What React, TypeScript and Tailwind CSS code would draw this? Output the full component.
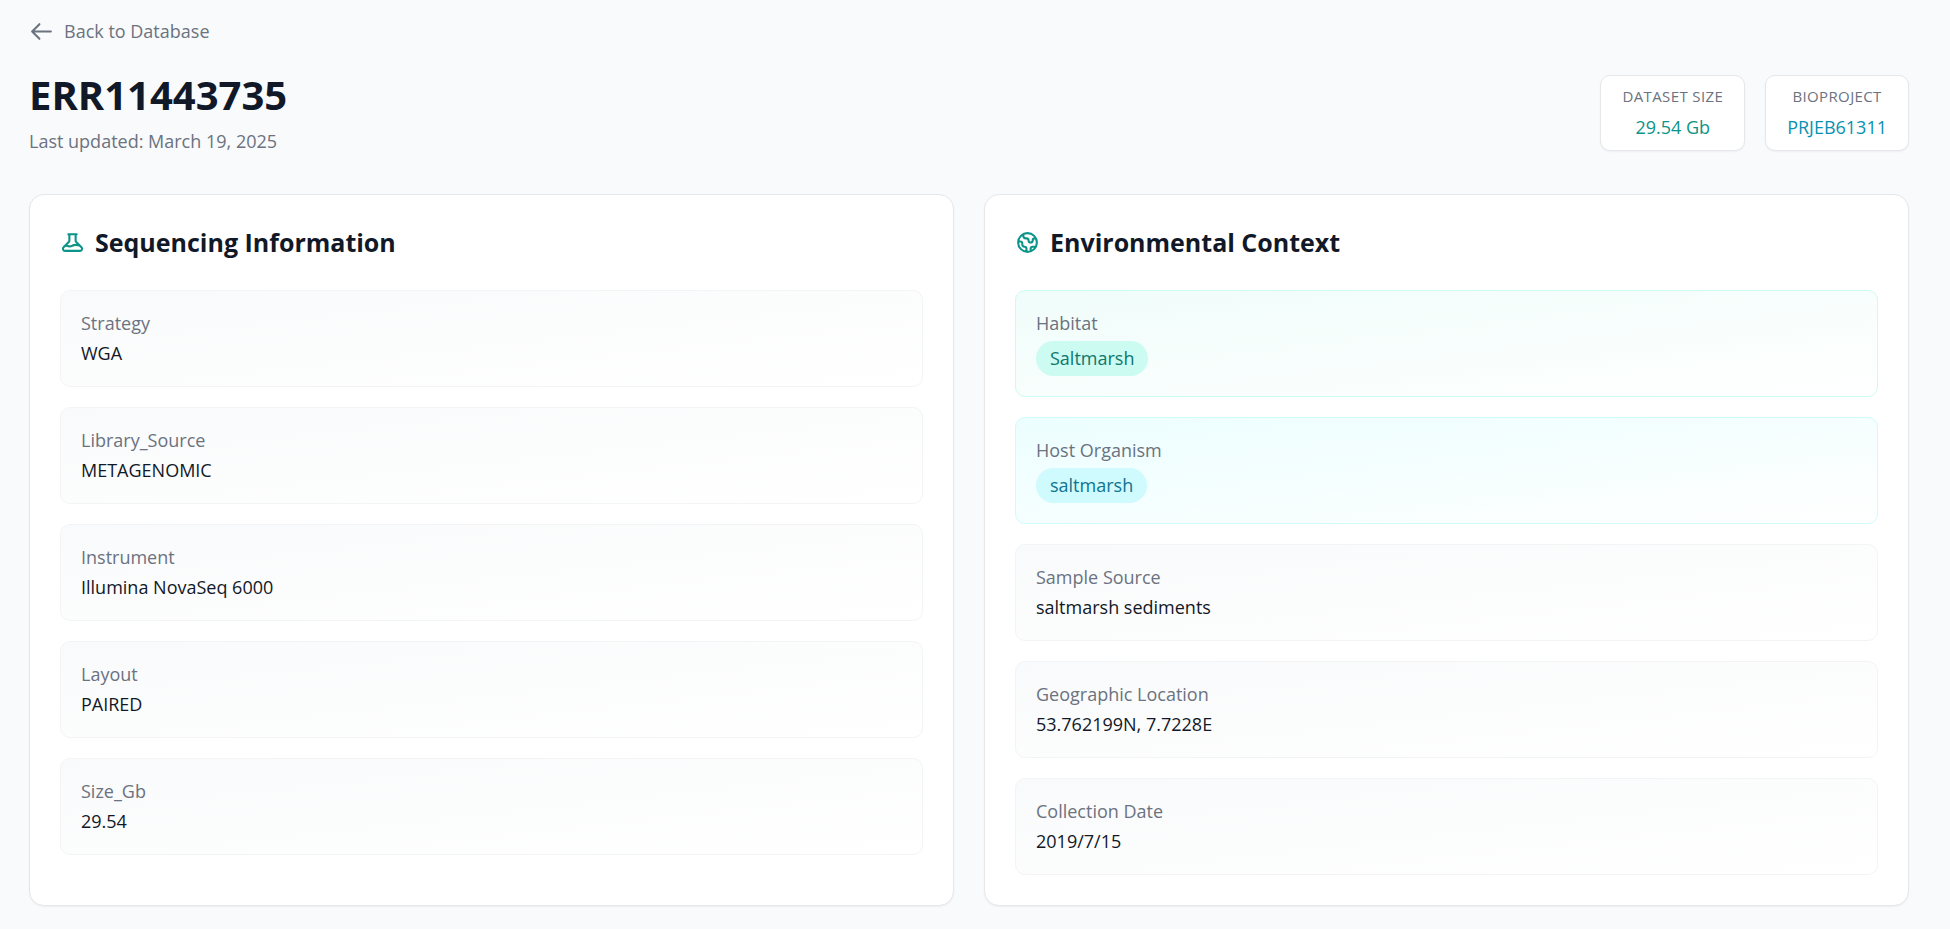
import React from 'react';
import { HiOutlineArrowLeft, HiOutlineBeaker, HiOutlineGlobe } from 'react-icons/hi';
import clsx from 'clsx';

type Tone = 'plain' | 'teal' | 'cyan';

interface Field {
  label: string;
  value: string;
  tone?: Tone;
}

const sequencing: Field[] = [
  { label: 'Strategy', value: 'WGA' },
  { label: 'Library_Source', value: 'METAGENOMIC' },
  { label: 'Instrument', value: 'Illumina NovaSeq 6000' },
  { label: 'Layout', value: 'PAIRED' },
  { label: 'Size_Gb', value: '29.54' },
];

const environment: Field[] = [
  { label: 'Habitat', value: 'Saltmarsh', tone: 'teal' },
  { label: 'Host Organism', value: 'saltmarsh', tone: 'cyan' },
  { label: 'Sample Source', value: 'saltmarsh sediments' },
  { label: 'Geographic Location', value: '53.762199N, 7.7228E' },
  { label: 'Collection Date', value: '2019/7/15' },
];

const boxStyles: Record<Tone, string> = {
  plain: 'border-[#f3f4f6] from-[#f9fafb]',
  teal: 'border-[#ccfbf1] from-[#f0fdfa]',
  cyan: 'border-[#cffafe] from-[#ecfeff]',
};

const badgeStyles: Record<Tone, string> = {
  plain: '',
  teal: 'bg-[#ccfbf1] text-[#0f766e]',
  cyan: 'bg-[#cffafe] text-[#0e7490]',
};

function FieldBox({ label, value, tone = 'plain' }: Field) {
  return (
    <div className={clsx('rounded-[10px] border bg-linear-to-br/srgb to-white p-5', boxStyles[tone])}>
      <dt className="mb-[5px] text-[#6b7280]">{label}</dt>
      <dd className="flex">
        {tone === 'plain' ? (
          <span className="text-[#111827]">{value}</span>
        ) : (
          <span className={clsx('rounded-full px-[14px] py-[5px]', badgeStyles[tone])}>{value}</span>
        )}
      </dd>
    </div>
  );
}

function Panel({ title, icon, fields }: { title: string; icon: React.ReactNode; fields: Field[] }) {
  return (
    <section className="rounded-[15px] border border-[#e5e7eb] bg-white p-[30px] shadow-xs">
      <h2 className="mb-[30px] flex items-center gap-[10px] text-[25px] leading-[35px] font-bold text-[#111827]">
        {icon}
        {title}
      </h2>
      <dl className="flex flex-col gap-5">
        {fields.map(field => (
          <FieldBox key={field.label} {...field} />
        ))}
      </dl>
    </section>
  );
}

function Stat({ label, children }: { label: string; children: React.ReactNode }) {
  return (
    <div className="rounded-[10px] border border-[#e5e7eb] bg-white px-[21px] py-[10px] text-center shadow-xs">
      <div className="text-[15px] leading-[20px] tracking-wide text-[#6b7280] uppercase">{label}</div>
      <div className="mt-[9px]">{children}</div>
    </div>
  );
}

export default function App() {
  return (
    <main className="min-h-screen bg-[#f9fafb] pt-[19px] pr-[41px] pb-6 pl-[29px] font-['Open_Sans','Noto_Sans',sans-serif] text-[18px] leading-[25px]">
      <a href="#database" className="inline-flex items-center gap-[10px] align-top text-[#6b7280] hover:text-[#0d9488]">
        <HiOutlineArrowLeft className="size-[25px]" />
        Back to Database
      </a>

      <header className="mt-[28px] mb-10 flex items-center justify-between">
        <div>
          <h1 className="text-[40px] leading-[46px] font-bold text-[#111827]">ERR11443735</h1>
          <p className="mt-[11px] text-[#6b7280]">Last updated: March 19, 2025</p>
        </div>
        <div className="flex gap-5">
          <Stat label="Dataset Size">
            <span className="text-[#0d9488]">29.54 Gb</span>
          </Stat>
          <Stat label="BioProject">
            <a href="#PRJEB61311" className="text-[#0891b2] hover:underline">PRJEB61311</a>
          </Stat>
        </div>
      </header>

      <div className="grid grid-cols-2 gap-[30px]">
        <Panel
          title="Sequencing Information"
          icon={<HiOutlineBeaker className="size-[25px] text-[#0d9488]" />}
          fields={sequencing}
        />
        <Panel
          title="Environmental Context"
          icon={<HiOutlineGlobe className="size-[25px] text-[#0d9488]" />}
          fields={environment}
        />
      </div>
    </main>
  );
}
